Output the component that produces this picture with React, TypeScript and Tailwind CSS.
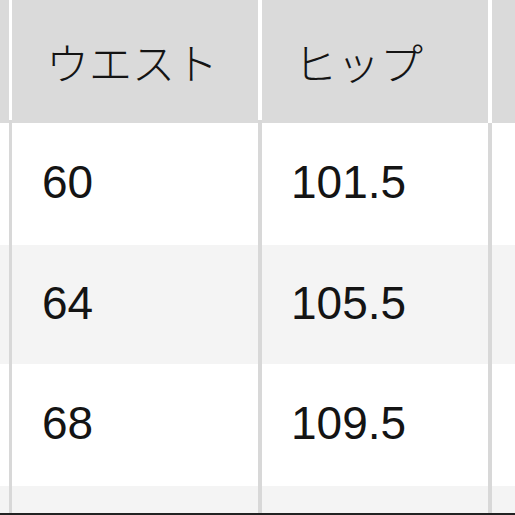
const rows = [
  { waist: "60", hip: "101.5", bg: "bg-white", h: "h-[122px]" },
  { waist: "64", hip: "105.5", bg: "bg-[#f4f4f4]", h: "h-[119px]" },
  { waist: "68", hip: "109.5", bg: "bg-white", h: "h-[122px]" },
];

function Row({
  a,
  b,
  bg,
  h,
  line,
  text,
  padA,
  padB,
}: {
  a: string;
  b: string;
  bg: string;
  h: string;
  line: string;
  text: string;
  padA: string;
  padB: string;
}) {
  return (
    <div className={`flex ${bg} ${h}`}>
      <div className="w-[9px] shrink-0" />
      <div className={`w-[249px] shrink-0 border-l-[3px] ${line} flex items-center ${padA} ${text}`}>
        {a}
      </div>
      <div className={`w-[230px] shrink-0 border-l-4 ${line} flex items-center ${padB} ${text}`}>
        {b}
      </div>
      <div className={`flex-1 border-l-4 ${line}`} />
    </div>
  );
}

export default function App() {
  return (
    <div
      className="w-[515px] h-[515px] overflow-hidden bg-white text-[#141414] flex flex-col"
      style={{ fontFamily: '"Liberation Sans", "Noto Sans CJK JP", sans-serif' }}
    >
      <Row
        a="ウエスト"
        b="ヒップ"
        bg="bg-[#dadada]"
        h="h-[123px]"
        line="border-white"
        text="text-[43px] font-['Noto_Sans_CJK_JP',sans-serif] font-light"
        padA="pl-[34px]"
        padB="pl-[32px]"
      />
      {rows.map((r) => (
        <Row
          key={r.waist}
          a={r.waist}
          b={r.hip}
          bg={r.bg}
          h={r.h}
          line="border-[#d8d8d8]"
          text="text-[46px] -mt-[3px]"
          padA="pl-[30px]"
          padB="pl-[29px]"
        />
      ))}
      <div className="flex-1 flex bg-[#f4f4f4]">
        <div className="w-[9px] shrink-0" />
        <div className="w-[249px] shrink-0 border-l-[3px] border-[#d8d8d8]" />
        <div className="w-[230px] shrink-0 border-l-4 border-[#d8d8d8]" />
        <div className="flex-1 border-l-4 border-[#d8d8d8]" />
      </div>
      <div className="h-[2px] bg-[#222]" />
    </div>
  );
}
